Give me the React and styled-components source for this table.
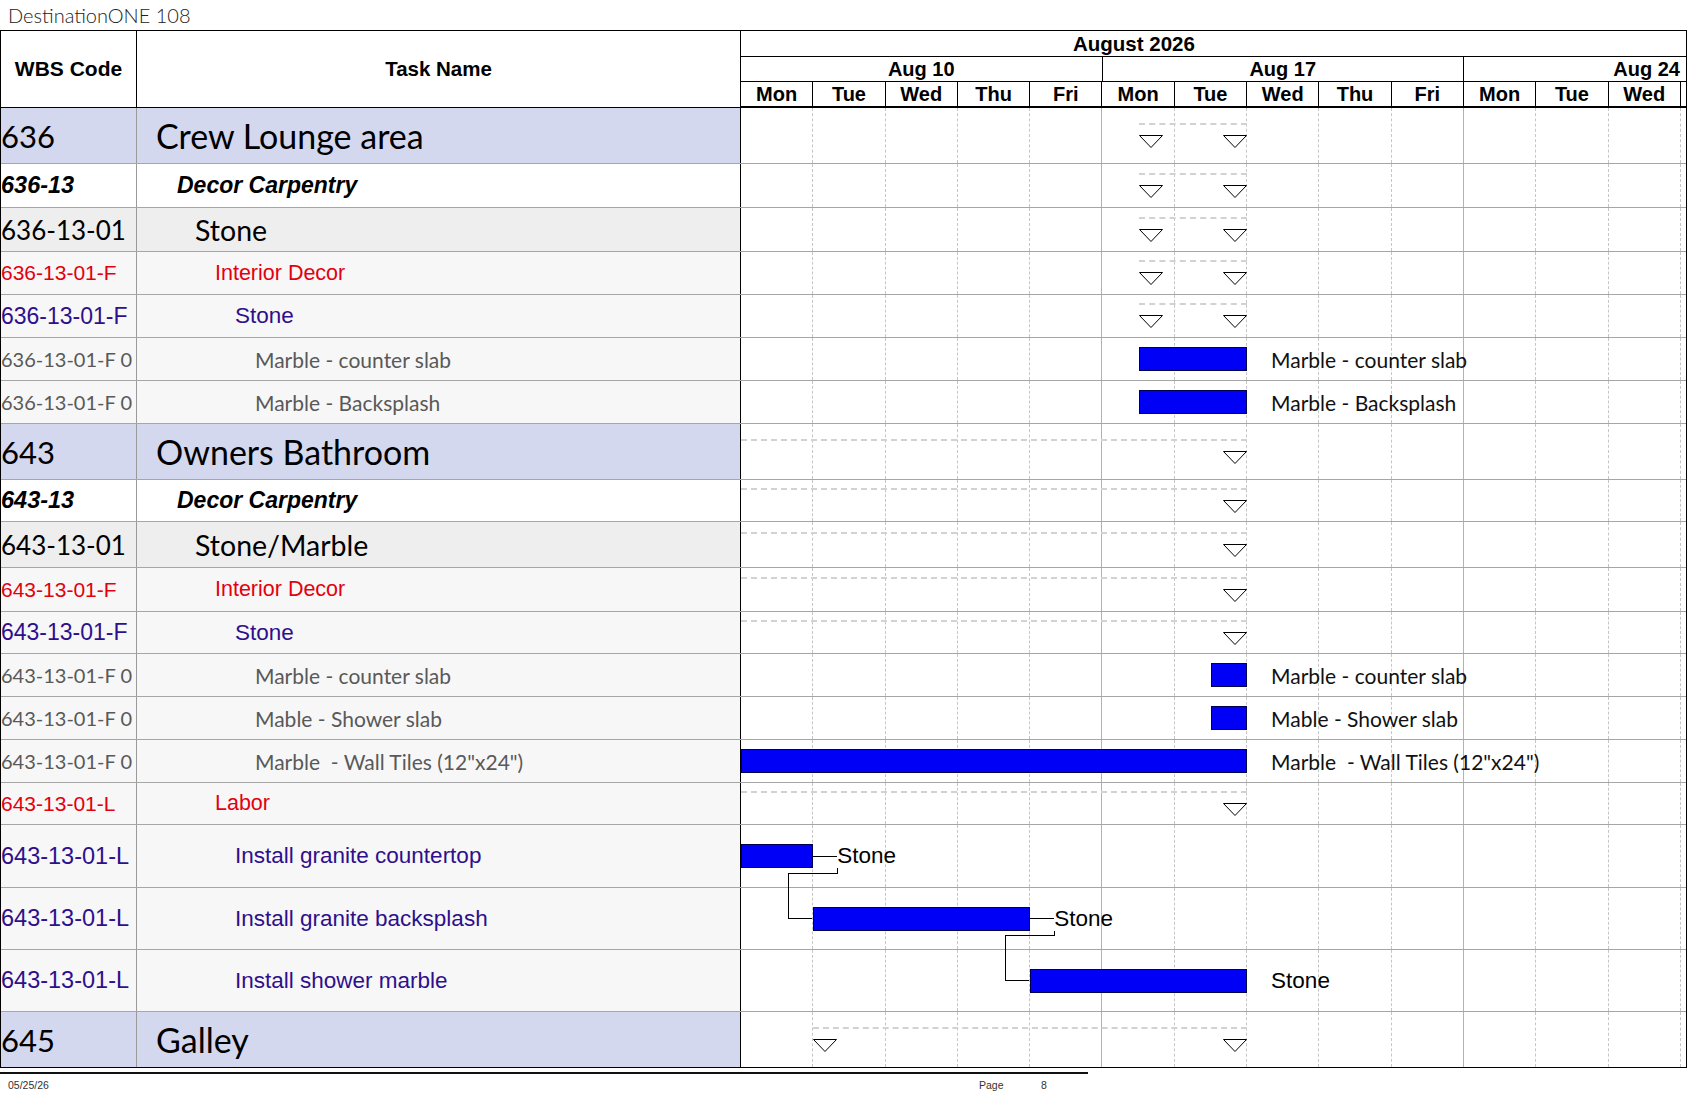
import React from "react";
import styled, { createGlobalStyle, css } from "styled-components";

const DAY = 72.3;
const DAYS = ["Mon", "Tue", "Wed", "Thu", "Fri", "Mon", "Tue", "Wed", "Thu", "Fri", "Mon", "Tue", "Wed"];
const WEEKS = ["Aug 10", "Aug 17", "Aug 24"];

const calibri = `"Lato", "Open Sans", sans-serif`;
const arial = `"Liberation Sans", Arial, sans-serif`;

// font per row kind; code = WBS column size, name = task column size
const KINDS = {
  group: { bg: "#d3d8ee", indent: 19, code: 31, name: 34, font: css`font-family: ${calibri}; color: #000;` },
  section: { bg: "#ffffff", indent: 40, code: 23.5, name: 23, font: css`font-family: ${arial}; font-weight: 700; font-style: italic; color: #000;` },
  area: { bg: "#eeeeee", indent: 58, code: 26, name: 28.5, font: css`font-family: ${calibri}; color: #000;` },
  phase: { bg: "#f7f7f7", indent: 78, code: 21, name: 21.5, font: css`font-family: ${arial}; color: #e3000f;` },
  trade: { bg: "#f7f7f7", indent: 98, code: 23, name: 22.5, font: css`font-family: ${arial}; color: #2e0f8c;` },
  item: { bg: "#f7f7f7", indent: 118, code: 20, name: 21, font: css`font-family: ${calibri}; color: #595959;` },
  task: { bg: "#f7f7f7", indent: 98, code: 23.5, name: 22.5, font: css`font-family: ${arial}; color: #2e0f8c;` },
};

const S636 = { from: 5.5, to: 7 };
const S643 = { from: 0, to: 7, clipped: true };

const ROWS = [
  { wbs: "636", name: "Crew Lounge area", kind: "group", h: 56, summary: S636 },
  { wbs: "636-13", name: "Decor Carpentry", kind: "section", h: 44, summary: S636 },
  { wbs: "636-13-01", name: "Stone", kind: "area", h: 44, summary: S636 },
  { wbs: "636-13-01-F", name: "Interior Decor", kind: "phase", h: 43, summary: S636 },
  { wbs: "636-13-01-F", name: "Stone", kind: "trade", h: 43, summary: S636 },
  { wbs: "636-13-01-F 0", name: "Marble - counter slab", kind: "item", h: 43, bar: { from: 5.5, to: 7 }, label: "Marble - counter slab" },
  { wbs: "636-13-01-F 0", name: "Marble - Backsplash", kind: "item", h: 43, bar: { from: 5.5, to: 7 }, label: "Marble - Backsplash" },
  { wbs: "643", name: "Owners Bathroom", kind: "group", h: 56, summary: S643 },
  { wbs: "643-13", name: "Decor Carpentry", kind: "section", h: 42, summary: S643 },
  { wbs: "643-13-01", name: "Stone/Marble", kind: "area", h: 46, summary: S643 },
  { wbs: "643-13-01-F", name: "Interior Decor", kind: "phase", h: 44, summary: S643 },
  { wbs: "643-13-01-F", name: "Stone", kind: "trade", h: 42, summary: S643 },
  { wbs: "643-13-01-F 0", name: "Marble - counter slab", kind: "item", h: 43, bar: { from: 6.5, to: 7 }, label: "Marble - counter slab" },
  { wbs: "643-13-01-F 0", name: "Mable - Shower slab", kind: "item", h: 43, bar: { from: 6.5, to: 7 }, label: "Mable - Shower slab" },
  { wbs: "643-13-01-F 0", name: "Marble  - Wall Tiles (12\"x24\")", kind: "item", h: 43, bar: { from: 0, to: 7 }, label: "Marble  - Wall Tiles (12\"x24\")" },
  { wbs: "643-13-01-L", name: "Labor", kind: "phase", h: 42, summary: S643 },
  { wbs: "643-13-01-L", name: "Install granite countertop", kind: "task", h: 63, bar: { from: 0, to: 1 }, label: "Stone", link: 1 },
  { wbs: "643-13-01-L", name: "Install granite backsplash", kind: "task", h: 62, bar: { from: 1, to: 4 }, label: "Stone", link: 4 },
  { wbs: "643-13-01-L", name: "Install shower marble", kind: "task", h: 62, bar: { from: 4, to: 7 }, label: "Stone" },
  { wbs: "645", name: "Galley", kind: "group", h: 55, summary: { from: 1, to: 7 } },
];

const GlobalStyle = createGlobalStyle`
  *, *::before, *::after {
    box-sizing: border-box;
  }
  body {
    margin: 0;
    background: #fff;
    font-family: ${arial};
  }
`;

const Page = styled.div`
  width: 1687px;
  background: #fff;
`;

const Title = styled.div`
  height: 30px;
  padding-left: 8px;
  display: flex;
  align-items: center;
  font-family: ${calibri};
  font-weight: 300;
  font-size: 20px;
  color: #222;
`;

const Frame = styled.div`
  border: 1px solid #000;
`;

const HeaderRow = styled.div`
  display: grid;
  grid-template-columns: 136px 604px 1fr;
  height: 77px;
  border-bottom: 1px solid #000;
`;

const HeadCell = styled.div`
  display: flex;
  align-items: center;
  justify-content: center;
  font-family: ${arial};
  font-weight: 700;
  font-size: ${(p) => p.$size || 20.5}px;
  color: #000;
  border-right: 1px solid #000;
`;

const TimeHead = styled.div`
  display: flex;
  flex-direction: column;
  font-family: ${arial};
  font-weight: 700;
  font-size: 20px;
  color: #000;
`;

const MonthRow = styled.div`
  height: 26px;
  border-bottom: 1px solid #000;
  display: flex;
  align-items: center;
  padding-left: 332px;
  font-size: 20.5px;
`;

const WeekRow = styled.div`
  height: 25px;
  border-bottom: 1px solid #000;
  display: flex;
`;

const WeekCell = styled.div`
  width: ${(p) => (p.$last ? "auto" : `${DAY * 5}px`)};
  flex: ${(p) => (p.$last ? 1 : "none")};
  display: flex;
  align-items: center;
  justify-content: ${(p) => (p.$last ? "flex-end" : "center")};
  padding-right: ${(p) => (p.$last ? 6 : 0)}px;
  border-right: ${(p) => (p.$last ? "none" : "1px solid #000")};
`;

const DayRow = styled.div`
  height: 25px;
  border-bottom: 1px solid #000;
  display: flex;
`;

const DayCell = styled.div`
  width: ${DAY}px;
  flex: none;
  display: flex;
  align-items: center;
  justify-content: center;
  border-right: 1px solid #000;
`;

const Row = styled.div`
  display: grid;
  grid-template-columns: 136px 604px 1fr;
  height: ${(p) => p.$h}px;
  border-bottom: 1px solid #a6a6a6;

  &:last-child {
    border-bottom: none;
  }
`;

const TextCell = styled.div`
  display: flex;
  align-items: center;
  overflow: hidden;
  white-space: pre;
  background: ${(p) => KINDS[p.$kind].bg};
  padding-left: ${(p) => p.$indent || 0}px;
  border-right: 1px solid ${(p) => p.$edge || "#9a9a9a"};
  font-size: ${(p) => p.$size}px;
  ${(p) => KINDS[p.$kind].font}
`;

const ChartCell = styled.div`
  position: relative;
  display: flex;
`;

const DayCol = styled.div`
  width: ${DAY}px;
  flex: none;
  border-right: 1px ${(p) => (p.$week ? "solid #b2b2b2" : "dashed #c6c6c6")};
`;

const SummaryLine = styled.div`
  position: absolute;
  top: calc(50% - 13px);
  height: 0;
  border-top: 2px dashed #d2d2d2;
`;

const Marker = styled.svg`
  position: absolute;
  top: calc(50% - 1px);
  width: 24px;
  height: 13px;
  overflow: visible;
`;

const Bar = styled.div`
  position: absolute;
  top: calc(50% - 12px);
  height: 24px;
  background: #0000f6;
  border: 1px solid #000050;
`;

const BarLabel = styled.div`
  position: absolute;
  top: 0;
  bottom: 0;
  display: flex;
  align-items: center;
  white-space: pre;
  color: #000;
  ${(p) =>
    p.$arial
      ? css`font-family: ${arial}; font-size: 22.5px;`
      : css`font-family: ${calibri}; font-size: 21px; color: #111;`}
`;

const LinkLayer = styled.svg`
  position: absolute;
  left: 0;
  top: 0;
  width: 100%;
  height: 100%;
  overflow: visible;
  pointer-events: none;
`;

const Footer = styled.footer`
  margin-top: 4px;
  width: 1088px;
  border-top: 2px solid #111;
  display: grid;
  grid-template-columns: 971px 62px auto;
  padding: 5px 0 0 8px;
  font-family: ${arial};
  font-size: 10.5px;
  line-height: 12px;
  color: #333;
`;

const Triangle = ({ left }) => (
  <Marker style={{ left }} viewBox="0 0 24 13">
    <polygon points="0.5,0.5 23.5,0.5 12,12.5" fill="#fff" stroke="#000" strokeWidth="1" />
  </Marker>
);

const Timeline = ({ row, next }) => {
  const { summary, bar, label, link, kind, h } = row;
  const cy = (h - 1) / 2;
  return (
    <ChartCell>
      {DAYS.map((d, i) => (
        <DayCol key={i} $week={i === 4 || i === 9} />
      ))}
      {summary && (
        <>
          <SummaryLine style={{ left: summary.from * DAY, width: (summary.to - summary.from) * DAY }} />
          {!summary.clipped && <Triangle left={summary.from * DAY} />}
          <Triangle left={summary.to * DAY - 24} />
        </>
      )}
      {bar && <Bar style={{ left: bar.from * DAY, width: (bar.to - bar.from) * DAY }} />}
      {label && (
        <BarLabel $arial={kind === "task"} style={{ left: bar.to * DAY + 24 }}>
          {label}
        </BarLabel>
      )}
      {link !== undefined && next && (
        <LinkLayer>
          <path
            d={`M${bar.to * DAY} ${cy} H${bar.to * DAY + 24} M${bar.to * DAY + 24} ${cy + 12} V${cy + 17} H${link * DAY - 25} V${h + (next.h - 1) / 2} H${link * DAY}`}
            fill="none"
            stroke="#000"
            strokeWidth="1"
            shapeRendering="crispEdges"
          />
        </LinkLayer>
      )}
    </ChartCell>
  );
};

export default function App() {
  return (
    <Page>
      <GlobalStyle />
      <Title>DestinationONE 108</Title>
      <Frame>
        <HeaderRow>
          <HeadCell $size={21}>WBS Code</HeadCell>
          <HeadCell>Task Name</HeadCell>
          <TimeHead>
            <MonthRow>August 2026</MonthRow>
            <WeekRow>
              {WEEKS.map((w, i) => (
                <WeekCell key={w} $last={i === WEEKS.length - 1}>
                  {w}
                </WeekCell>
              ))}
            </WeekRow>
            <DayRow>
              {DAYS.map((d, i) => (
                <DayCell key={i}>{d}</DayCell>
              ))}
            </DayRow>
          </TimeHead>
        </HeaderRow>
        {ROWS.map((row, i) => (
          <Row key={i} $h={row.h}>
            <TextCell $kind={row.kind} $size={KINDS[row.kind].code}>
              {row.wbs}
            </TextCell>
            <TextCell $kind={row.kind} $size={KINDS[row.kind].name} $indent={KINDS[row.kind].indent} $edge="#000">
              {row.name}
            </TextCell>
            <Timeline row={row} next={ROWS[i + 1]} />
          </Row>
        ))}
      </Frame>
      <Footer>
        <span>05/25/26</span>
        <span>Page</span>
        <span>8</span>
      </Footer>
    </Page>
  );
}
